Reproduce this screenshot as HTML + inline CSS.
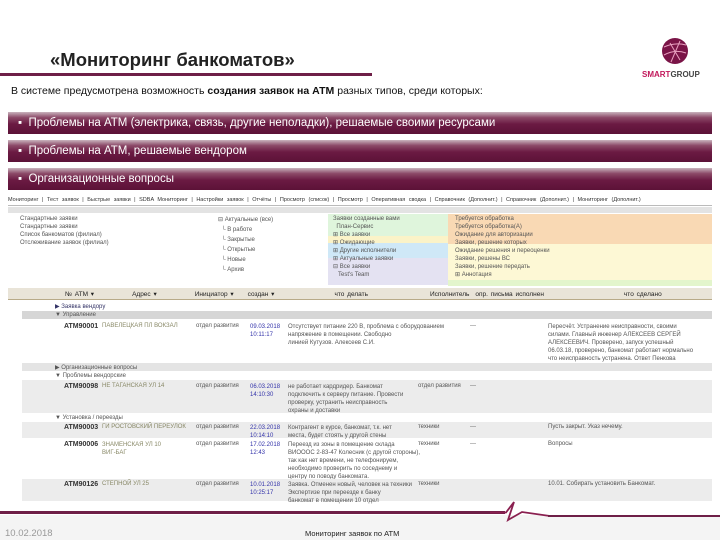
<!DOCTYPE html><html><head><meta charset="utf-8"><style>
*{margin:0;padding:0;box-sizing:border-box}
body{width:720px;height:540px;background:#fff;position:relative;overflow:hidden;font-family:"Liberation Sans",sans-serif;color:#000}
.a{position:absolute;white-space:nowrap}
.bar{position:absolute;left:8px;width:704px;height:22px;background:linear-gradient(#c9b3bd 0%,#8c4a68 25%,#6b1a43 55%,#5c1237 100%);color:#fff;font-size:11.5px;line-height:22px;padding-left:10px}
.s{font-size:6px;color:#333}
.t{font-size:6px;color:#555}
</style></head><body>
<div class="a" style="left:50px;top:49px;font-size:18.5px;font-weight:bold;color:#222">«Мониторинг банкоматов»</div>
<div class="a" style="left:0;top:73px;width:372px;height:3px;background:#6e1f47"></div>
<svg class="a" style="left:661px;top:37px" width="28" height="28"><circle cx="14" cy="14" r="13" fill="#7a1447"/><path d="M3 10Q14 5 25 8M3 18Q14 12 25 16M9 6L19 23M19 4L10 25" stroke="#e8a0c0" stroke-width="1" fill="none"/></svg>
<div class="a" style="left:642px;top:70px;font-size:8px;font-weight:bold;color:#c2185b">SMART<span style="color:#444">GROUP</span></div>
<div class="a" style="left:11px;top:85px;font-size:10.5px;color:#111">В системе предусмотрена возможность <b>создания заявок на АТМ</b> разных типов, среди которых:</div>
<div class="bar" style="top:112px">▪&nbsp; Проблемы на АТМ (электрика, связь, другие неполадки), решаемые своими ресурсами</div>
<div class="bar" style="top:140px">▪&nbsp; Проблемы на АТМ, решаемые вендором</div>
<div class="bar" style="top:168px">▪&nbsp; Организационные вопросы</div>
<div class="a s" style="left:8px;top:194px;width:704px;height:12px;border-bottom:1px solid #bbb;font-size:5.5px;line-height:12px;word-spacing:2px">Мониторинг | Тест заявок | Быстрые заявки | SDBA Мониторинг | Настройки заявок | Отчёты | Просмотр (список) | Просмотр | Оперативная сводка | Справочник (Дополнит.) | Справочник (Дополнит.) | Мониторинг (Дополнит.)</div>
<div class="a" style="left:8px;top:207px;width:704px;height:6px;background:#e3e3e3"></div>
<div class="a t" style="left:20px;top:215px;line-height:8px">Стандартные заявки<br>Стандартные заявки<br>Список банкоматов (филиал)<br>Отслеживание заявок (филиал)</div>
<div class="a t" style="left:218px;top:215px;line-height:10px">⊟ Актуальные (все)<br>&nbsp;&nbsp;└ В работе<br>&nbsp;&nbsp;└ Закрытые<br>&nbsp;&nbsp;└ Открытые<br>&nbsp;&nbsp;└ Новые<br>&nbsp;&nbsp;└ Архив</div>
<div class="a" style="left:328px;top:214px;width:120px;height:22px;background:#dff5dc"></div>
<div class="a" style="left:328px;top:236px;width:120px;height:7px;background:#fbf3c8"></div>
<div class="a" style="left:328px;top:243px;width:120px;height:15px;background:#cfe8f7"></div>
<div class="a" style="left:328px;top:258px;width:120px;height:27px;background:#e4e2f2"></div>
<div class="a t" style="left:333px;top:215px;line-height:8px">Заявки созданные вами<br>&nbsp;&nbsp;План-Сервис<br>⊞ Все заявки<br>⊞ Ожидающие<br>⊞ Другие исполнители<br>⊞ Актуальные заявки<br>⊟ Все заявки<br>&nbsp;&nbsp;&nbsp;Test's Team</div>
<div class="a" style="left:448px;top:214px;width:264px;height:30px;background:#f9d9b4"></div>
<div class="a" style="left:448px;top:244px;width:264px;height:36px;background:#fdf8d5"></div>
<div class="a" style="left:448px;top:280px;width:264px;height:6px;background:#e3f5cc"></div>
<div class="a t" style="left:455px;top:215px;line-height:8px">Требуется обработка<br>Требуется обработка(А)<br>Ожидание для авторизации<br>Заявки, решение которых<br>Ожидание решения и переоценки<br>Заявки, решены ВС<br>Заявки, решение передать<br>⊞ Аннотация</div>
<div class="a" style="left:8px;top:288px;width:704px;height:12px;background:#e9e4d8;border-bottom:1px solid #b8aa88"></div>
<div class="a" style="left:65px;top:290px;font-size:6.5px;color:#222;word-spacing:1px">№ АТМ ▾<span style="margin-left:38px">Адрес ▾</span><span style="margin-left:38px">Инициатор ▾</span><span style="margin-left:14px">создан ▾</span><span style="margin-left:60px">что делать</span><span style="margin-left:62px">Исполнитель</span><span style="margin-left:6px">опр. письма исполнен</span><span style="margin-left:80px">что сделано</span></div>
<div class="a t" style="left:55px;top:303px;color:#336">▶ Заявка вендору</div>
<div class="a" style="left:22px;top:311px;width:690px;height:8px;background:#d6d6d6"></div>
<div class="a t" style="left:55px;top:312px">▼ Управление</div>
<div class="a s" style="left:64px;top:323px;font-size:7px;font-weight:bold">ATM90001</div>
<div class="a t" style="left:102px;top:323px;color:#886">ПАВЕЛЕЦКАЯ ПЛ ВОКЗАЛ</div>
<div class="a t" style="left:196px;top:323px">отдел развития</div>
<div class="a t" style="left:250px;top:323px;color:#33a;line-height:8px">09.03.2018<br>10:11:17</div>
<div class="a t" style="left:288px;top:323px;line-height:8px">Отсутствует питание 220 В, проблема с оборудованием<br>напряжение в помещении. Свободно<br>линией Кутузов. Алексеев С.И.</div>
<div class="a t" style="left:470px;top:323px">---</div>
<div class="a t" style="left:548px;top:323px;line-height:8px">Пересчёт. Устранение неисправности, своими<br>силами. Главный инженер АЛЕКСЕЕВ СЕРГЕЙ<br>АЛЕКСЕЕВИЧ. Проверено, запуск успешный<br>06.03.18, проверено, банкомат работает нормально<br>что неисправность устранена. Ответ Пенкова</div>
<div class="a" style="left:22px;top:363px;width:690px;height:8px;background:#e4e4e4"></div>
<div class="a t" style="left:55px;top:364px">▶ Организационные вопросы</div>
<div class="a t" style="left:55px;top:373px">▼ Проблемы вендорские</div>
<div class="a" style="left:22px;top:380px;width:690px;height:33px;background:#ececec"></div>
<div class="a s" style="left:64px;top:383px;font-size:7px;font-weight:bold">ATM90098</div>
<div class="a t" style="left:102px;top:383px;color:#886">НЕ ТАГАНСКАЯ УЛ 14</div>
<div class="a t" style="left:196px;top:383px">отдел развития</div>
<div class="a t" style="left:250px;top:383px;color:#33a;line-height:8px">06.03.2018<br>14:10:30</div>
<div class="a t" style="left:288px;top:383px;line-height:8px">не работает кардридер. Банкомат<br>подключить к серверу питание. Провести<br>проверку, устранить неисправность<br>охраны и доставки</div>
<div class="a t" style="left:418px;top:383px">отдел развития</div><div class="a t" style="left:470px;top:383px">---</div>
<div class="a t" style="left:55px;top:415px">▼ Установка / переезды</div>
<div class="a" style="left:22px;top:422px;width:690px;height:16px;background:#ececec"></div>
<div class="a s" style="left:64px;top:424px;font-size:7px;font-weight:bold">ATM90003</div>
<div class="a t" style="left:102px;top:424px;color:#886">ГИ РОСТОВСКИЙ ПЕРЕУЛОК</div>
<div class="a t" style="left:196px;top:424px">отдел развития</div>
<div class="a t" style="left:250px;top:424px;color:#33a;line-height:8px">22.03.2018<br>10:14:10</div>
<div class="a t" style="left:288px;top:424px;line-height:8px">Контрагент в курсе, банкомат, т.к. нет<br>места, будет стоять у другой стены</div>
<div class="a t" style="left:418px;top:424px">техники</div><div class="a t" style="left:470px;top:424px">---</div>
<div class="a t" style="left:548px;top:424px">Пусть закрыт. Указ нечему.</div>
<div class="a s" style="left:64px;top:441px;font-size:7px;font-weight:bold">ATM90006</div>
<div class="a t" style="left:102px;top:441px;color:#886;line-height:8px">ЗНАМЕНСКАЯ УЛ 10<br>ВИГ-БАГ</div>
<div class="a t" style="left:196px;top:441px">отдел развития</div>
<div class="a t" style="left:250px;top:441px;color:#33a;line-height:8px">17.02.2018<br>12:43</div>
<div class="a t" style="left:288px;top:441px;line-height:8px">Переезд из зоны в помещение склада<br>ВИОООС 2-83-47 Колесник (с другой стороны),<br>так как нет времени, не телефонируем,<br>необходимо проверить по соседнему и<br>центру по поводу банкомата.</div>
<div class="a t" style="left:418px;top:441px">техники</div><div class="a t" style="left:470px;top:441px">---</div>
<div class="a t" style="left:548px;top:441px">Вопросы</div>
<div class="a" style="left:22px;top:479px;width:690px;height:22px;background:#ececec"></div>
<div class="a s" style="left:64px;top:481px;font-size:7px;font-weight:bold">ATM90126</div>
<div class="a t" style="left:102px;top:481px;color:#886">СТЕПНОЙ УЛ 25</div>
<div class="a t" style="left:196px;top:481px">отдел развития</div>
<div class="a t" style="left:250px;top:481px;color:#33a;line-height:8px">10.01.2018<br>10:25:17</div>
<div class="a t" style="left:288px;top:481px;line-height:8px">Заявка. Отменен новый, человек на техники<br>Экспертизе при переезде к банку<br>банкомат в помещении 10 отдел</div>
<div class="a t" style="left:418px;top:481px">техники</div>
<div class="a t" style="left:548px;top:481px">10.01. Собирать установить Банкомат.</div>
<div class="a" style="left:0;top:515px;width:720px;height:25px;background:#f4f4f4"></div>
<div class="a" style="left:0;top:511px;width:505px;height:3px;background:#6e1f47"></div>
<svg class="a" style="left:490px;top:500px" width="60" height="30"><path d="M0 12.5L16 12.5L24 2L18 20L32 12L60 16" stroke="#8a2050" stroke-width="1.8" fill="none"/></svg>
<div class="a" style="left:548px;top:515px;width:172px;height:2px;background:#6e1f47"></div>
<div class="a" style="left:5px;top:528px;font-size:9.5px;color:#999">10.02.2018</div>
<div class="a" style="left:305px;top:529px;font-size:7.5px;color:#222">Мониторинг заявок по АТМ</div>
</body></html>
